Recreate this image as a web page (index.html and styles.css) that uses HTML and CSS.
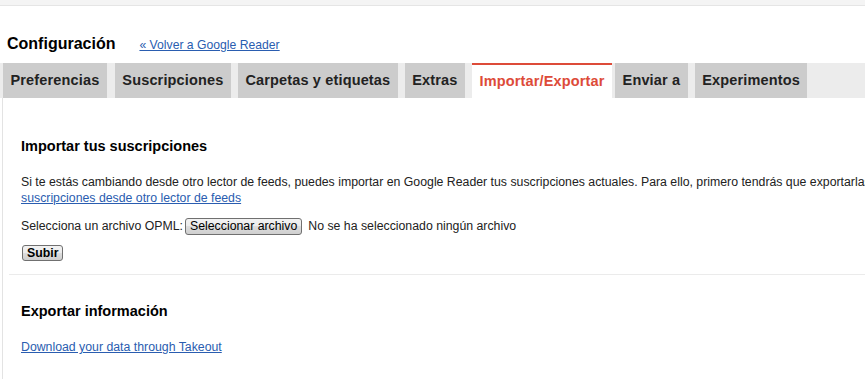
FILE: index.html
```html
<!DOCTYPE html>
<html lang="es">
<head>
  <meta charset="UTF-8">
  <title>Configuración - Google Reader</title>
  <link rel="stylesheet" href="styles.css">
</head>
<body>

<div class="topbar"></div>

<div class="header">
  <h1>Configuración</h1>
  <a href="#" class="back-link">« Volver a Google Reader</a>
</div>

<div class="tabs">
  <div class="tab">Preferencias</div>
  <div class="tab">Suscripciones</div>
  <div class="tab">Carpetas y etiquetas</div>
  <div class="tab">Extras</div>
  <div class="tab selected">Importar/Exportar</div>
  <div class="tab">Enviar a</div>
  <div class="tab">Experimentos</div>
</div>

<div class="content">
  <div class="section import">
    <h2>Importar tus suscripciones</h2>
    <p class="intro">
      <span class="nowrap">Si te estás cambiando desde otro lector de feeds, puedes importar en Google Reader tus suscripciones actuales. Para ello, primero tendrás que exportarlas</span><br>
      <a href="#">suscripciones desde otro lector de feeds</a>
    </p>
    <div class="file-row">
      <label>Selecciona un archivo OPML:</label>
      <button class="btn">Seleccionar archivo</button>
      <span class="file-name">No se ha seleccionado ningún archivo</span>
    </div>
    <button class="btn btn-bold">Subir</button>
  </div>

  <div class="section export">
    <h2>Exportar información</h2>
    <a href="#" class="takeout">Download your data through Takeout</a>
  </div>
</div>

</body>
</html>
```

FILE: styles.css
```css
body {
  font-family: 'Liberation Sans', Arial, sans-serif;
  margin: 0;
  padding: 0;
  color: #222;
  background-color: #fff;
  overflow: hidden;
}

a {
  color: #2a5db0;
}

/* Barra superior */
.topbar {
  height: 5px;
  background-color: #f4f4f4;
  border-bottom: 1px solid #e5e5e5;
}

.header {
  display: flex;
  align-items: baseline;
  padding: 28px 0 8px 7px;
  line-height: 20px;
}

.header h1 {
  margin: 0;
  font-size: 16px;
  font-weight: bold;
  color: #000;
}

.back-link {
  margin-left: 24px;
  font-size: 12.2px;
}

/* Pestañas */
.tabs {
  display: flex;
  height: 35px;
  padding-left: 3px;
  background-color: #ececec;
}

.tab {
  background-color: #ccc;
  color: #222;
  font-size: 14.5px;
  font-weight: bold;
  letter-spacing: 0.15px;
  line-height: 35px;
  padding: 0 7.5px;
  margin-right: 7px;
  white-space: nowrap;
}

.tab:first-child {
  margin-right: 8px;
}

.tab.selected {
  background-color: #fff;
  color: #dd4b39;
  border-top: 2px solid #dd4b39;
  line-height: 33px;
  margin-right: 3px;
}

/* Contenido */
.content {
  margin-left: 2px;
  height: 281px;
  border-left: 1px solid #e3e3e3;
  box-sizing: border-box;
}

.section {
  margin-left: 6px;
  padding-left: 12px;
}

.section h2 {
  margin: 0;
  font-size: 14.5px;
  line-height: 18px;
  color: #000;
}

.import {
  padding-top: 39px;
  padding-bottom: 13px;
  border-bottom: 1px solid #ebebeb;
}

.intro {
  margin: 19px 0 0;
  font-size: 12.3px;
  line-height: 16px;
}

.nowrap {
  white-space: nowrap;
}

.file-row {
  display: flex;
  align-items: center;
  margin-top: 12px;
  font-size: 12.3px;
  line-height: 17px;
  white-space: nowrap;
}

.btn {
  font-family: 'Liberation Sans', Arial, sans-serif;
  font-size: 12.3px;
  color: #000;
  height: 17px;
  padding: 0 4px;
  margin: 0 6px 0 2px;
  border: 1px solid #707070;
  border-radius: 3px;
  background: linear-gradient(#f2f2f2, #ebebeb 50%, #dddddd 50%, #cfcfcf);
  line-height: 15px;
  cursor: pointer;
}

.btn-bold {
  display: block;
  margin: 10px 0 0 1px;
  padding: 0 4px;
  height: 16px;
  line-height: 14px;
  font-weight: bold;
}

.export {
  padding-top: 27px;
}

.takeout {
  display: inline-block;
  margin-top: 19px;
  font-size: 12.3px;
  line-height: 16px;
}
```
